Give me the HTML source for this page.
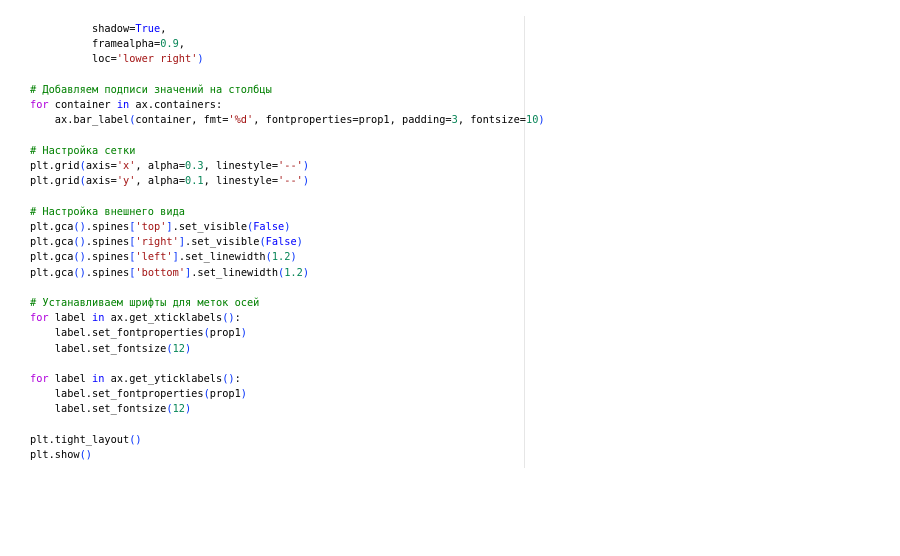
<!DOCTYPE html>
<html><head><meta charset="utf-8"><style>
html,body{margin:0;padding:0;background:#fff;width:900px;height:556px;overflow:hidden}
pre{position:absolute;left:30px;top:22px;margin:0;font-family:"DejaVu Sans Mono","Liberation Mono",monospace;font-size:10.3px;line-height:15.22px;color:#000}
.c{color:#008000}.k{color:#af00db}.b{color:#0000ff}.s{color:#a31515}.n{color:#098658}.p{color:#0431fa}
.vl{position:absolute;left:524px;top:16px;width:1px;height:452px;background:#e6e6e6}
</style></head><body>
<div class="vl"></div>
<pre>          shadow=<span class="b">True</span>,
          framealpha=<span class="n">0.9</span>,
          loc=<span class="s">'lower right'</span><span class="p">)</span>

<span class="c"># Добавляем подписи значений на столбцы</span>
<span class="k">for</span> container <span class="b">in</span> ax.containers:
    ax.bar_label<span class="p">(</span>container, fmt=<span class="s">'%d'</span>, fontproperties=prop1, padding=<span class="n">3</span>, fontsize=<span class="n">10</span><span class="p">)</span>

<span class="c"># Настройка сетки</span>
plt.grid<span class="p">(</span>axis=<span class="s">'x'</span>, alpha=<span class="n">0.3</span>, linestyle=<span class="s">'--'</span><span class="p">)</span>
plt.grid<span class="p">(</span>axis=<span class="s">'y'</span>, alpha=<span class="n">0.1</span>, linestyle=<span class="s">'--'</span><span class="p">)</span>

<span class="c"># Настройка внешнего вида</span>
plt.gca<span class="p">()</span>.spines<span class="p">[</span><span class="s">'top'</span><span class="p">]</span>.set_visible<span class="p">(</span><span class="b">False</span><span class="p">)</span>
plt.gca<span class="p">()</span>.spines<span class="p">[</span><span class="s">'right'</span><span class="p">]</span>.set_visible<span class="p">(</span><span class="b">False</span><span class="p">)</span>
plt.gca<span class="p">()</span>.spines<span class="p">[</span><span class="s">'left'</span><span class="p">]</span>.set_linewidth<span class="p">(</span><span class="n">1.2</span><span class="p">)</span>
plt.gca<span class="p">()</span>.spines<span class="p">[</span><span class="s">'bottom'</span><span class="p">]</span>.set_linewidth<span class="p">(</span><span class="n">1.2</span><span class="p">)</span>

<span class="c"># Устанавливаем шрифты для меток осей</span>
<span class="k">for</span> label <span class="b">in</span> ax.get_xticklabels<span class="p">()</span>:
    label.set_fontproperties<span class="p">(</span>prop1<span class="p">)</span>
    label.set_fontsize<span class="p">(</span><span class="n">12</span><span class="p">)</span>

<span class="k">for</span> label <span class="b">in</span> ax.get_yticklabels<span class="p">()</span>:
    label.set_fontproperties<span class="p">(</span>prop1<span class="p">)</span>
    label.set_fontsize<span class="p">(</span><span class="n">12</span><span class="p">)</span>

plt.tight_layout<span class="p">()</span>
plt.show<span class="p">()</span></pre>
</body></html>
